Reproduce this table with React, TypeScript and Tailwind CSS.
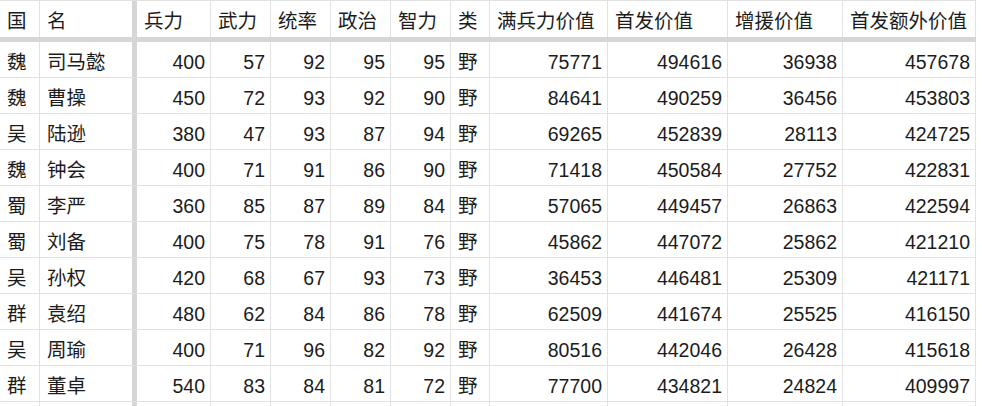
const headers = ["国", "名", "兵力", "武力", "统率", "政治", "智力", "类", "满兵力价值", "首发价值", "增援价值", "首发额外价值"]

const rows: (string | number)[][] = [
  ["魏", "司马懿", 400, 57, 92, 95, 95, "野", 75771, 494616, 36938, 457678],
  ["魏", "曹操", 450, 72, 93, 92, 90, "野", 84641, 490259, 36456, 453803],
  ["吴", "陆逊", 380, 47, 93, 87, 94, "野", 69265, 452839, 28113, 424725],
  ["魏", "钟会", 400, 71, 91, 86, 90, "野", 71418, 450584, 27752, 422831],
  ["蜀", "李严", 360, 85, 87, 89, 84, "野", 57065, 449457, 26863, 422594],
  ["蜀", "刘备", 400, 75, 78, 91, 76, "野", 45862, 447072, 25862, 421210],
  ["吴", "孙权", 420, 68, 67, 93, 73, "野", 36453, 446481, 25309, 421171],
  ["群", "袁绍", 480, 62, 84, 86, 78, "野", 62509, 441674, 25525, 416150],
  ["吴", "周瑜", 400, 71, 96, 82, 92, "野", 80516, 442046, 26428, 415618],
  ["群", "董卓", 540, 83, 84, 81, 72, "野", 77700, 434821, 24824, 409997],
]

const grid =
  "grid grid-cols-[40px_97px_74px_60px_60px_60px_60px_39px_118px_120px_115px_133px]"

function cellClass(col: number, header: boolean) {
  const base = "flex items-center pt-[6px] border-[#e2e2e2] border-r whitespace-nowrap overflow-hidden"
  const thick = col === 1 ? " border-r-[5px] border-r-[#d6d6d6]" : ""
  const align = typeof rows[0][col] === "number" && !header ? " justify-end pr-[5px]" : " pl-[7px]"
  return base + thick + align
}

export default function App() {
  return (
    <div
      className="w-[982px] h-[406px] overflow-hidden bg-white text-[#1c1c1c] text-[19.5px] leading-none"
      style={{ fontFamily: '"Liberation Sans", "Noto Sans CJK SC", sans-serif' }}
    >
      <div className="w-[976px] border-t border-[#e2e2e2]">
        <div className={grid + " h-[41px] border-b-[5px] border-[#d6d6d6]"}>
          {headers.map((h, i) => (
            <div key={h} className={cellClass(i, true)}>
              {h}
            </div>
          ))}
        </div>
        {rows.map((r, ri) => (
          <div key={ri} className={grid + " h-[36px] border-b border-[#e2e2e2]"}>
            {r.map((v, ci) => (
              <div key={ci} className={cellClass(ci, false)}>
                {v}
              </div>
            ))}
          </div>
        ))}
        <div className={grid + " h-[36px]"}>
          {headers.map((h, i) => (
            <div key={h} className={cellClass(i, false)} />
          ))}
        </div>
      </div>
    </div>
  )
}
